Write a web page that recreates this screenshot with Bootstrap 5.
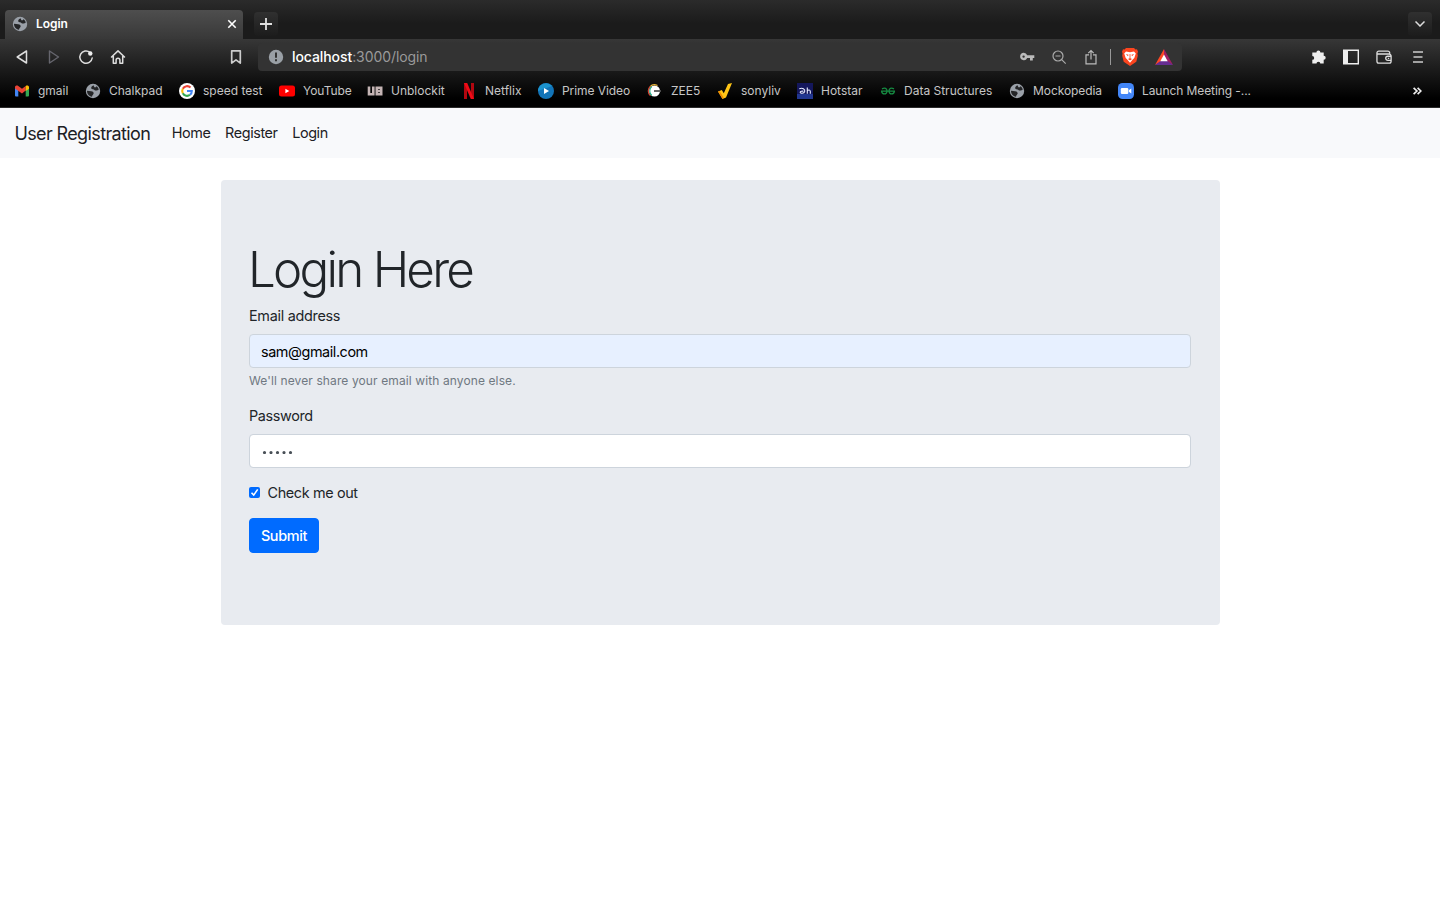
<!DOCTYPE html>
<html lang="en">
<head>
<meta charset="utf-8">
<meta name="viewport" content="width=device-width, initial-scale=1">
<title>Login</title>
<link href="https://cdn.jsdelivr.net/npm/bootstrap@5.3.0/dist/css/bootstrap.min.css" rel="stylesheet">
<style>
body{font-family:Inter,"Liberation Sans",sans-serif;font-size:14.4px;color:#212529;height:900px;overflow:hidden;background:#fff}
svg{display:block;flex:none}
.tabstrip{height:39px;background:linear-gradient(#2b2b2b,#1b1b1b 60%,#1b1b1b);padding:10px 8px 0 5px}
.tab-on{width:238px;height:29px;background:linear-gradient(#4e4e4e,#383838);border-radius:4px 4px 0 0;padding:0 6px 2px 7px;color:#fff;font-size:12px;font-weight:600}
.tab-on span{letter-spacing:-.05px}
.sq{width:24px;height:24px;border-radius:4px;background:linear-gradient(#303030,#1c1c1c);margin-top:2px}
.plus{margin-left:11px}
.lower{height:69px;background:linear-gradient(#373737,#000 88%);border-bottom:1px solid #2a2a2a}
.tools{height:36px;padding:4px 17px 4px 14px}
.navkeys{width:244px}
.omni{width:924px;height:28px;background:#333;border-radius:4px;padding:0 9px 0 10px;font-size:14px;color:#9a9a9a}
.omni b{color:#fff;font-weight:500}
.omni .url{margin:-2px 0 0 8px;letter-spacing:-.08px}
.sep{width:1px;height:16px;background:#999;margin:0 10px 0 11px}
.bat{margin-left:16px}
.right{gap:16px}
.right svg:nth-child(3){margin-left:1px}
.right svg:last-child{margin-left:4px}
.bkm{display:grid;grid-template-columns:71px 94px 100px 88px 94px 77px 109px 70px 80px 83px 129px 109px 1fr 9px;height:32px;padding:0 18px 0 14px;font-size:12px;color:#c6c6c6;align-items:center;white-space:nowrap}
.bkm>div{display:flex;gap:8px;align-items:center}
.bkm .clip{letter-spacing:-.08px}
.site{height:50px;background:#f8f9fb;padding:0 14.4px}
.site a{color:#1c2024;text-decoration:none}
.site .brandname{font-size:18px;margin-right:21.500px;letter-spacing:-.62px}
.site .links{gap:14.600px;letter-spacing:-.4px}
.panel{width:999px;height:445px;margin:22px auto 0;background:#e8ebf0;border-radius:4px;padding:57.6px 28.5px}
.panel h1{font-size:49.3px;font-weight:350;line-height:60.5px;margin:1px 0 5.500px -1px;letter-spacing:-2.750px}
.panel label{display:block;line-height:21.6px;margin-bottom:7.2px;font-size:14.4px;letter-spacing:-.36px}
.panel .first{margin-bottom:8.200px;letter-spacing:-.28px}
.field{height:34px;padding:0 11px;border:1px solid #cdd4dc;border-radius:4px;font-size:14.4px;color:#495057;letter-spacing:-.42px}
.auto,.auto:focus{background:#e7f0ff;color:#000}
.hint{font-size:12px;color:#6f7881;line-height:17px;margin:4px 0 16px;letter-spacing:.11px}
.tick{width:11px;height:11px;margin:0}
.panel .out{margin:0}
.checkrow{margin:13.700px 0 14.500px;gap:7.500px}
.go{--bs-btn-bg:#006bff;--bs-btn-border-color:#006bff;width:70px;height:35px;border-radius:4px;padding:0;font-size:14.4px;font-weight:500;letter-spacing:-.33px}
</style>
</head>
<body>
<svg width="0" height="0" class="position-absolute"><defs>
<symbol id="globe" viewBox="0 0 16 16"><circle cx="8" cy="8" r="7.200" fill="#9aa0a8"/><path d="M8.500 2.200C6.800 3 5.800 4.200 6.300 5.600c.4 1.200 2.500.5 3.400 1.700.3.400 3.800.2 4-.9-.4-1.500-1.200-2.400-2.200-3.100-.4 1-1.200 1.300-2.100 1z" fill="#242527"/><path d="M2 7.800l4.200.5c1.700.3 2.700 1.200 2.400 2.400-.3 1-1.300 1-1.600 3C4 13.500 2 11 2 7.800z" fill="#242527"/></symbol>
</defs></svg>

<header>
<div class="tabstrip d-flex">
  <div class="tab-on d-flex align-items-center">
    <svg width="16" height="16"><use href="#globe"/></svg><span class="ms-2">Login</span>
    <svg class="ms-auto" width="10" height="10" viewBox="0 0 10 10" stroke="#fff" stroke-width="1.600"><path d="M1.300 1.300l7.400 7.400M8.700 1.300L1.300 8.700"/></svg>
  </div>
  <div class="sq d-flex align-items-center justify-content-center plus"><svg width="12" height="12" viewBox="0 0 12 12" stroke="#e0e0e0" stroke-width="1.800"><path d="M6 0v12M0 6h12"/></svg></div>
  <div class="sq ms-auto d-flex align-items-center justify-content-center"><svg width="10" height="6" viewBox="0 0 10 6" fill="none" stroke="#ddd" stroke-width="1.500"><path d="M.5.5L5 5 9.500.5"/></svg></div>
</div>
<div class="lower">
  <div class="tools d-flex align-items-center">
    <div class="navkeys d-flex">
      <svg width="16" height="16" viewBox="0 0 16 16" fill="none" stroke="#ddd" stroke-width="1.500" stroke-linejoin="round"><path d="M12.500 2v12L3.200 8z"/></svg>
      <svg class="ms-3" width="16" height="16" viewBox="0 0 16 16" fill="none" stroke="#66666e" stroke-width="1.400" stroke-linejoin="round"><path d="M3.500 2v12l9-6z"/></svg>
      <svg class="ms-3" width="16" height="16" viewBox="0 0 16 16" fill="none" stroke="#ddd" stroke-width="1.500"><path d="M12 3.300A6.200 6.200 0 1 0 14.200 9" stroke-linecap="round"/><circle cx="12.300" cy="4.500" r="2.200" fill="#eee" stroke="none"/></svg>
      <svg class="ms-3" width="16" height="16" viewBox="0 0 16 16" fill="none" stroke="#ddd" stroke-width="1.500" stroke-linejoin="round" stroke-linecap="round"><path d="M1.500 8L8 1.900 14.500 8M3.300 7v7.200h2.800v-3.100a1.900 1.900 0 0 1 3.800 0v3.100h2.800V7"/></svg>
      <svg class="ms-auto me-3" width="12" height="16" viewBox="0 0 12 16" fill="none" stroke="#ccc" stroke-width="1.700" stroke-linejoin="round"><path d="M1.700 1.800h8.600v12.300L6 10.800l-4.300 3.300z"/></svg>
    </div>
    <div class="omni d-flex align-items-center">
      <svg width="16" height="16" viewBox="0 0 16 16"><circle cx="8" cy="8" r="7.200" fill="#9aa0a6"/><path d="M8 3.500v5.300M8 10.300v2" stroke="#333" stroke-width="2"/></svg>
      <span class="url"><b>localhost</b>:3000/login</span>
      <div class="ms-auto d-flex align-items-center">
        <svg width="16" height="16" viewBox="0 0 16 16"><path fill-rule="evenodd" fill="#bbb" d="M4.600 3.800a3.700 3.700 0 1 0 3.600 5.200H11v2.500h2.800V9h1.500V6.300H8.200a3.700 3.700 0 0 0-3.600-2.500zm0 2.600a1.200 1.200 0 1 1 0 2.400 1.200 1.200 0 0 1 0-2.400z"/></svg>
        <svg class="ms-3" width="16" height="16" viewBox="0 0 16 16" fill="none" stroke="#aaa" stroke-width="1.200"><circle cx="7" cy="7" r="5"/><path d="M4.500 7h5M10.700 10.700l4 4"/></svg>
        <svg class="ms-3" width="16" height="16" viewBox="0 0 16 16" fill="none" stroke="#bbb" stroke-width="1.200"><path d="M6 5.900H3v8.900h10V5.900h-3M8 10.500V1.700M5.300 4.200L8 1.500l2.700 2.700"/></svg>
        <i class="sep"></i>
        <svg width="18" height="20" viewBox="0 0 18 20"><path d="M5 1h8l1.500 1.500 1.500-.2 1 2.500-.6 1.600.4 2.300-1.500 6L9 19l-6.300-4.300-1.500-6 .4-2.300L1 4.800l1-2.500 1.500.2z" fill="#fb451f"/><path d="M5 4.500l4 .7 4-.7 1.800 2-1.500 4.500-1.300 1.300L9 15.800l-3-3.500L4.700 11 3.200 6.500z" fill="#fff"/><path d="M4.800 7l2.700.7-.5 1.600zM13.200 7l-2.700.7.5 1.600zM7 12l2-1 2 1-2 1.400zM8.600 7h.8v4h-.8z" fill="#fb451f"/></svg>
        <svg class="bat" width="18" height="16" viewBox="0 0 18 16"><path d="M9 0L0 16l9-5z" fill="#ff4724"/><path d="M9 0l9 16-9-5z" fill="#9e1f63"/><path d="M0 16h18l-5.500-4h-7z" fill="#662d91"/><path d="M9 5.500l3.700 6.700H5.300z" fill="#fff"/></svg>
      </div>
    </div>
    <div class="d-flex align-items-center ms-auto right">
      <svg width="16" height="16" viewBox="0 0 16 16" fill="#eee"><path d="M2.300 3.500h3.100a2 2 0 1 1 4 0h3.300v3.300a2 2 0 1 1 0 4v3.800H9.300a1.900 1.900 0 0 0-3.800 0H1.300v-3.800a1.900 1.900 0 0 0 0-3.800V3.500z"/></svg>
      <svg width="16" height="16" viewBox="0 0 16 16"><path d="M.7 1.200h14.600v13.600H.7z" fill="none" stroke="#eee" stroke-width="1.400"/><path d="M1 1.500h4v13H1z" fill="#eee"/></svg>
      <svg width="17" height="16" viewBox="0 0 18 16" fill="none" stroke="#ddd" stroke-width="1.400"><path d="M14.500 5V3.700a2 2 0 0 0-2-2H3a2 2 0 0 0-2 2v8.800a2 2 0 0 0 2 2h11a2 2 0 0 0 2-2V7a2.300 2.300 0 0 0-2.500-2.200H1.500M16.500 7.200h-4a2.200 2.200 0 0 0 0 4.400h4M12.500 9.400h1.500"/></svg>
      <svg width="10" height="12" viewBox="0 0 10 12" stroke="#ccc" stroke-width="1.500"><path d="M0 1h10M.5 6h9M0 11h10"/></svg>
    </div>
  </div>
  <div class="bkm">
    <div><svg width="16" height="16" viewBox="0 0 16 16"><path d="M1 3.500L4.300 6v7.500H2a1 1 0 0 1-1-1z" fill="#4285f4"/><path d="M11.700 6L15 3.500v9a1 1 0 0 1-1 1h-2.300z" fill="#34a853"/><path d="M1 4.500C1 2.500 3 2 4.300 3L8 5.800 11.700 3v4.600L8 10.400 1 5.500z" fill="#ea4335"/><path d="M11.700 3C13 2 15 2.500 15 4.500v1.200l-3.300 2.400z" fill="#fbbc04"/></svg><span>gmail</span></div>
    <div><svg width="16" height="16"><use href="#globe"/></svg><span>Chalkpad</span></div>
    <div><svg width="16" height="16" viewBox="0 0 16 16"><circle cx="8" cy="8" r="8" fill="#fff"/><g fill="none" stroke-width="2.100"><path d="M11.500 4.600A4.800 4.800 0 0 0 3.800 5.700" stroke="#ea4335"/><path d="M3.800 5.700a4.800 4.800 0 0 0 0 4.600" stroke="#fbbc05"/><path d="M3.800 10.300a4.800 4.800 0 0 0 7.200 1.500" stroke="#34a853"/><path d="M11 11.800A4.800 4.800 0 0 0 12.800 8H8" stroke="#4285f4"/></g></svg><span>speed test</span></div>
    <div><svg width="16" height="16" viewBox="0 0 16 16"><rect y="2.500" width="16" height="11" rx="2.500" fill="#f00"/><path d="M6.400 5.800v4.400L10.300 8z" fill="#fff"/></svg><span class="clip">YouTube</span></div>
    <div><svg width="16" height="16" viewBox="0 0 16 16" fill="none" stroke="#c4b4b4" stroke-width="2.600"><path d="M2 3.500v7.700h4.300V3.500M9.800 4.700h4.400v6.500H9.800zM9.600 8h4.600"/></svg><span>Unblockit</span></div>
    <div><svg width="16" height="16" viewBox="0 0 16 16"><path d="M3 0h3v16H3zM10 0h3v16h-3z" fill="#b20710"/><path d="M3 0h3.200L13 16H9.800z" fill="#f00b16"/></svg><span>Netflix</span></div>
    <div><svg width="16" height="16" viewBox="0 0 16 16"><circle cx="8" cy="8" r="8" fill="#1274b8"/><path d="M0 8a8 8 0 0 1 14-5z" fill="#1c93ce"/><path d="M6 5v6l5-3z" fill="#fff"/></svg><span class="clip">Prime Video</span></div>
    <div><svg width="16" height="16" viewBox="0 0 16 16"><circle cx="7.500" cy="8" r="5.500" fill="#fff"/><path d="M10.500 2.600A6.200 6.200 0 0 0 3 3.600" fill="none" stroke="#e8b53a" stroke-width="1.200"/><path d="M3.500 3.200a6.300 6.300 0 0 0 0 9.600" fill="none" stroke="#d74332" stroke-width="1.200"/><path d="M4.800 3.500a6 6 0 0 0 0 9" fill="none" stroke="#20ad89" stroke-width="1.100"/><path d="M7 8h7" stroke="#555" stroke-width="1.800"/></svg><span>ZEE5</span></div>
    <div><svg width="16" height="16" viewBox="0 0 16 16"><path d="M1 8.500L4.800 7l2 3.300L11 .9 15 0 9 14.500 5.500 16z" fill="#ffc516"/><path d="M1 8.500L2.600 8l4 6.500-1.100 1.500z" fill="#f08a00"/></svg><span>sonyliv</span></div>
    <div><svg width="16" height="16" viewBox="0 0 16 16"><path d="M0 0h16v16H0z" fill="#14175c"/><path d="M0 11h16v5H0z" fill="#21368f"/><path d="M2.300 5.800c3-1.300 6.100.2 5.400 2.800-.6 2-4.500 2.200-4.500.6 0-1 2.200-1.300 3.300-1M10.300 4.500v6.200M10.300 8c1-1.600 3-1.200 3 .5v2.200" fill="none" stroke="#e5e9ff" stroke-width="1.100"/></svg><span>Hotstar</span></div>
    <div><svg width="16" height="16" viewBox="0 0 16 16" fill="none" stroke="#168b42" stroke-width="1.300"><path d="M2 5.800c3-1.500 5-.4 5 2.300 0 3.900-5 3.700-5.400 0M14 5.800c-3-1.500-5-.4-5 2.300 0 3.900 5 3.700 5.400 0M1 8.200h14"/></svg><span>Data Structures</span></div>
    <div><svg width="16" height="16"><use href="#globe"/></svg><span class="clip">Mockopedia</span></div>
    <div><svg width="16" height="16" viewBox="0 0 16 16"><rect width="16" height="16" rx="4.500" fill="#4386f7"/><rect x="2.800" y="5.100" width="7.500" height="5.800" rx="1.200" fill="#fff"/><path d="M10.800 7.200l2.500-1.800v5.200l-2.500-1.800z" fill="#fff"/></svg><span class="clip">Launch Meeting -...</span></div>
    <svg width="9" height="8" viewBox="0 0 9 8" fill="none" stroke="#eee" stroke-width="1.700"><path d="M.6.800L3.900 4 .6 7.200M4.600.800L7.900 4 4.600 7.200"/></svg>
  </div>
</div>
</header>

<nav class="site d-flex align-items-center">
  <a href="#" class="brandname">User Registration</a>
  <div class="links d-flex"><a href="#">Home</a><a href="#">Register</a><a href="#">Login</a></div>
</nav>

<main class="panel">
  <h1>Login Here</h1>
  <form>
    <label class="first" for="mail">Email address</label>
    <input id="mail" class="form-control field auto" type="text" value="sam@gmail.com">
    <div class="hint">We'll never share your email with anyone else.</div>
    <label>Password</label>
    <div class="form-control field d-flex align-items-center"><svg width="34" height="6" viewBox="0 0 34 6" fill="#495057"><circle cx="3.500" cy="4.600" r="1.600"/><circle cx="10" cy="4.600" r="1.600"/><circle cx="16.500" cy="4.600" r="1.600"/><circle cx="23" cy="4.600" r="1.600"/><circle cx="29.500" cy="4.600" r="1.600"/></svg></div>
    <div class="d-flex align-items-center checkrow">
      <svg class="tick" viewBox="0 0 11 11"><rect width="11" height="11" rx="2" fill="#006bff"/><path d="M2.500 5.800l2.200 2.300 4-5.700" fill="none" stroke="#fff" stroke-width="1.600"/></svg>
      <label class="out">Check me out</label>
    </div>
    <button type="button" class="btn btn-primary go">Submit</button>
  </form>
</main>
<script src="https://cdn.jsdelivr.net/npm/bootstrap@5.3.0/dist/js/bootstrap.bundle.min.js"></script>
</body>
</html>
